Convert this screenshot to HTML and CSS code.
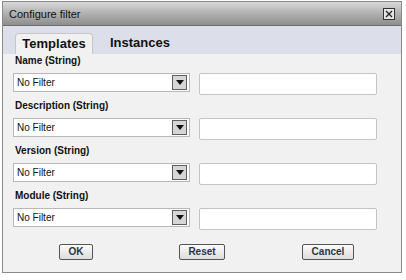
FILE: index.html
```html
<!DOCTYPE html>
<html>
<head>
<meta charset="utf-8">
<link rel="stylesheet" href="styles.css">
</head>
<body>
<div class="dialog">
  <div class="titlebar">
    <span class="title">Configure filter</span>
    <span class="close"><svg width="8" height="8" viewBox="0 0 8 8"><path d="M1 1L7 7M7 1L1 7" stroke="#222" stroke-width="1.3"/></svg></span>
  </div>
  <div class="tabs">
    <div class="tab active">Templates</div>
    <div class="tab">Instances</div>
  </div>
  <div class="content">
    <div class="group">
      <div class="label">Name (String)</div>
      <div class="row">
        <div class="select"><span>No Filter</span><span class="drop"><svg width="8" height="5" viewBox="0 0 8 5"><path d="M0 0H8L4 5Z" fill="#111"/></svg></span></div>
        <div class="input"></div>
      </div>
    </div>
    <div class="group">
      <div class="label">Description (String)</div>
      <div class="row">
        <div class="select"><span>No Filter</span><span class="drop"><svg width="8" height="5" viewBox="0 0 8 5"><path d="M0 0H8L4 5Z" fill="#111"/></svg></span></div>
        <div class="input"></div>
      </div>
    </div>
    <div class="group">
      <div class="label">Version (String)</div>
      <div class="row">
        <div class="select"><span>No Filter</span><span class="drop"><svg width="8" height="5" viewBox="0 0 8 5"><path d="M0 0H8L4 5Z" fill="#111"/></svg></span></div>
        <div class="input"></div>
      </div>
    </div>
    <div class="group">
      <div class="label">Module (String)</div>
      <div class="row">
        <div class="select"><span>No Filter</span><span class="drop"><svg width="8" height="5" viewBox="0 0 8 5"><path d="M0 0H8L4 5Z" fill="#111"/></svg></span></div>
        <div class="input"></div>
      </div>
    </div>
    <div class="buttons">
      <div class="cell"><span class="btn ok">OK</span></div>
      <div class="cell"><span class="btn reset">Reset</span></div>
      <div class="cell"><span class="btn cancel">Cancel</span></div>
    </div>
  </div>
</div>
</body>
</html>
```

FILE: styles.css
```css
html, body {
  margin: 0;
  padding: 0;
  background: #ffffff;
}
body {
  font-family: "Liberation Sans", Arial, sans-serif;
  padding: 1px 0 0 2px;
}
.dialog {
  width: 400px;
  height: 272px;
  box-sizing: border-box;
  border: 1px solid #8a8a8a;
  background: #f0f1f0;
  display: flex;
  flex-direction: column;
}
.titlebar {
  height: 23px;
  border-bottom: 1px solid #6e6e6e;
  background: linear-gradient(#d9d9d9, #b4b4b4 45%, #8e8e8e);
  display: flex;
  align-items: center;
  justify-content: space-between;
  padding: 0 6px 0 6px;
}
.title {
  font-size: 11px;
  color: #111;
  margin-top: 1px;
}
.close {
  width: 10px;
  height: 10px;
  border: 1px solid #333;
  background: #e6e6e6;
  display: flex;
  align-items: center;
  justify-content: center;
  margin-right: 0px;
}
.tabs {
  height: 28px;
  background: #dcdfe9;
  display: flex;
  align-items: flex-end;
  padding-left: 12px;
}
.tab {
  height: 21px;
  padding: 0 11px;
  font-size: 13px;
  font-weight: bold;
  color: #111;
  line-height: 20px;
  box-sizing: border-box;
  margin-right: 6px;
}
.tab.active {
  background: #f0f1f0;
  border: 1px solid #c6c6c6;
  border-bottom: none;
  border-radius: 4px 4px 0 0;
  width: 78px;
  text-align: center;
  padding: 0;
}
.content {
  padding: 0 0 0 10px;
  display: flex;
  flex-direction: column;
}
.group {
  display: flex;
  flex-direction: column;
  margin-bottom: 4px;
}
.label {
  font-size: 10px;
  font-weight: bold;
  color: #111;
  line-height: 14px;
  padding-left: 2px;
  margin-bottom: 5px;
}
.row {
  display: flex;
  align-items: flex-start;
  gap: 9px;
}
.select {
  width: 177px;
  height: 19px;
  box-sizing: border-box;
  border: 1px solid #b8b8b8;
  background: #fff;
  display: flex;
  align-items: center;
  justify-content: space-between;
  padding: 0 2px 0 3px;
  font-size: 10px;
  color: #111;
}
.drop {
  width: 15px;
  height: 15px;
  box-sizing: border-box;
  border: 1px solid #5e5e5e;
  background: #d6d6d6;
  display: flex;
  align-items: center;
  justify-content: center;
}
.input {
  width: 178px;
  height: 22px;
  box-sizing: border-box;
  border: 1px solid #c4c4c4;
  border-radius: 2px;
  background: #fff;
}
.buttons {
  display: grid;
  grid-template-columns: 126px 126px 126px;
  margin-top: 10px;
}
.cell {
  display: flex;
  justify-content: center;
}
.btn {
  height: 16px;
  box-sizing: border-box;
  border: 1px solid #555;
  border-radius: 2px;
  background: linear-gradient(#fbfbfb, #dcdcdc);
  font-size: 10px;
  font-weight: bold;
  color: #2b3447;
  line-height: 14px;
  text-align: center;
}
.ok { width: 34px; }
.reset { width: 46px; }
.cancel { width: 52px; }
```
